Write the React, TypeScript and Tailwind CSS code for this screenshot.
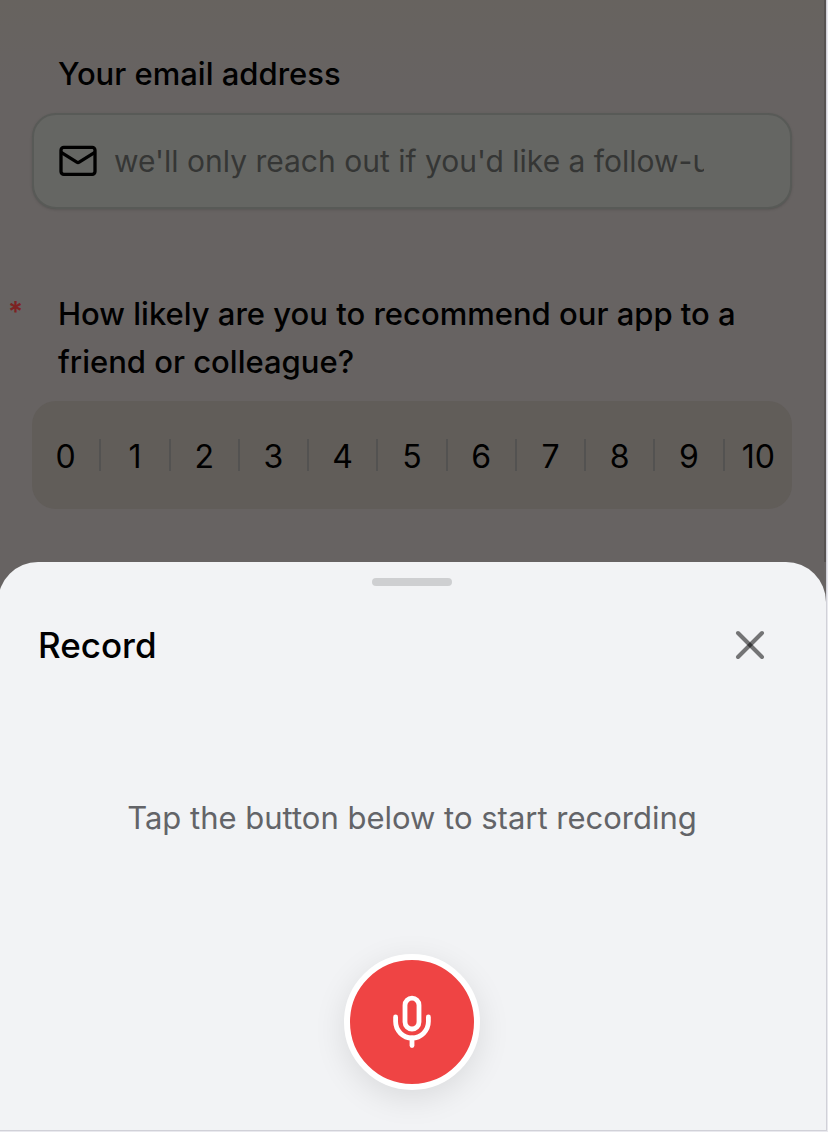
import { useState } from 'react';

const SCORES = [0, 1, 2, 3, 4, 5, 6, 7, 8, 9, 10];

function MailIcon() {
  return (
    <svg
      viewBox="0 0 38 32"
      className="h-8 w-[38px] shrink-0"
      fill="none"
      stroke="currentColor"
      strokeWidth="3.3"
      strokeLinecap="round"
      strokeLinejoin="round"
      aria-hidden="true"
    >
      <rect x="2" y="2.4" width="34" height="27" rx="2.8" />
      <path d="M2.6 7.6l15.2 9.6c.8.5 1.6.5 2.4 0l15.2-9.6" />
    </svg>
  );
}

function CloseIcon() {
  return (
    <svg viewBox="0 0 32 32" className="size-8" fill="none" stroke="#000" strokeOpacity="0.52" strokeWidth="4" strokeLinecap="round" aria-hidden="true">
      <path d="M4 4l24 24" />
      <path d="M28 4L4 28" />
    </svg>
  );
}

function MicIcon() {
  return (
    <svg viewBox="0 0 40 56" className="h-14 w-10" fill="none" stroke="#fff" strokeWidth="4.8" strokeLinecap="round" strokeLinejoin="round" aria-hidden="true">
      <rect x="13" y="4.2" width="14" height="30.8" rx="7" />
      <path d="M3.6 23v4.6a16.4 16.4 0 0 0 32.8 0V23" />
      <path d="M20 44v7.6" />
    </svg>
  );
}

function FeedbackForm() {
  const [score, setScore] = useState<number | null>(null);

  return (
    <form className="flex-1 border-r-2 border-[#565250] bg-linear-to-b from-[#67635f] to-[#676362] to-15% pt-[50px] pr-8 pb-[53px] pl-[34px]">
      <label htmlFor="email" className="block pl-[26px] text-[31px] leading-12 font-medium">
        Your email address
      </label>
      <div className="mt-[15px] flex h-24 items-center gap-[17px] rounded-3xl border-2 border-[#585a57] bg-[#656663] pr-[86px] pl-[25px] shadow-sm">
        <MailIcon />
        <input
          id="email"
          type="email"
          placeholder="we'll only reach out if you'd like a follow-up"
          className="min-w-0 flex-1 bg-transparent text-[30px] leading-12 outline-none placeholder:text-[#353635]"
        />
      </div>

      <div className="relative mt-[81px]">
        <span className="absolute top-1.5 -left-6 text-[28px] leading-8 font-semibold text-[#7d2323]">*</span>
        <h2 id="score-label" className="pl-[26px] text-[31px] leading-12 font-medium">
          How likely are you to recommend our app to a friend or colleague?
        </h2>
      </div>
      <div
        role="group"
        aria-labelledby="score-label"
        className="mt-[15px] flex h-[108px] items-center rounded-3xl bg-[#615d59]"
      >
        {SCORES.map((value) => (
          <button
            key={value}
            type="button"
            aria-pressed={score === value}
            onClick={() => setScore(value)}
            className="h-8 flex-1 border-r-2 border-[#535251] pt-0.5 text-[32px] leading-8 last:border-r-0"
          >
            {value}
          </button>
        ))}
      </div>
    </form>
  );
}

function RecordSheet() {
  return (
    <section
      role="dialog"
      aria-labelledby="record-title"
      className="flex flex-col items-center rounded-t-[40px] bg-[#f2f3f5] px-10 pt-4 pb-10"
    >
      <div className="h-2 w-20 rounded-full bg-[#cecfd1]" />
      <div className="mt-[35px] flex w-full items-center justify-between pr-5">
        <h1 id="record-title" className="text-[35px] leading-12 font-medium">
          Record
        </h1>
        <button type="button" aria-label="Close">
          <CloseIcon />
        </button>
      </div>
      <p className="mt-[125px] text-[31px] leading-12 text-[#636468]">
        Tap the button below to start recording
      </p>
      <button
        type="button"
        aria-label="Start recording"
        className="mt-28 flex size-[136px] items-center justify-center rounded-full border-6 border-white bg-[#ef4444] shadow-[0_8px_32px_rgba(0,0,0,0.1)]"
      >
        <MicIcon />
      </button>
    </section>
  );
}

export default function App() {
  return (
    <div className="overflow-hidden bg-[#e9e9ee] pr-px pb-px font-['Inter',sans-serif] text-black">
      <div className="-ml-0.5 flex min-h-[calc(100vh-1px)] flex-col border-r border-b border-[#d1d1d8] bg-[#676362]">
        <FeedbackForm />
        <RecordSheet />
      </div>
    </div>
  );
}
